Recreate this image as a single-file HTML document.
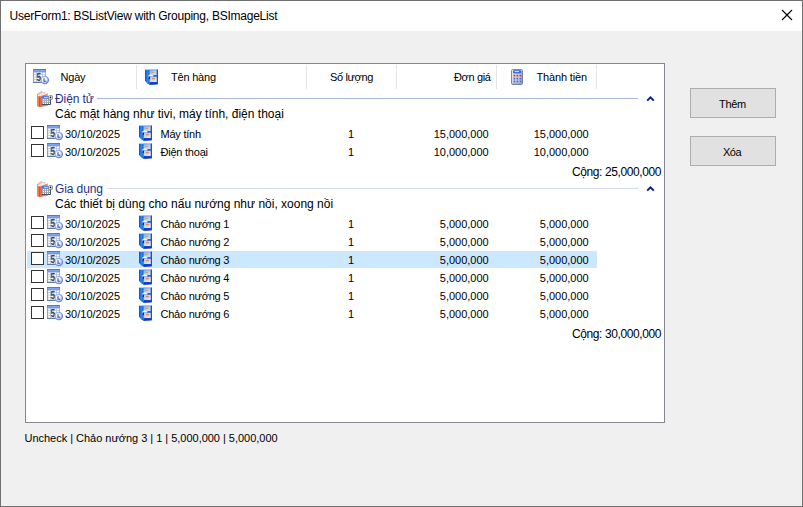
<!DOCTYPE html>
<html lang="vi"><head><meta charset="utf-8"><title>UserForm1</title><style>
html,body{margin:0;padding:0}
body{width:803px;height:507px;overflow:hidden;background:#f0f0f0;font-family:"Liberation Sans",sans-serif;position:relative;color:#000}
.abs,.t,.ic{position:absolute}
.ic{overflow:visible}
.t{white-space:nowrap;line-height:1}
#win{position:absolute;left:0;top:0;width:801px;height:505px;border:1px solid #707070}
#title{position:absolute;left:1px;top:1px;width:801px;height:30px;background:#fff}
#lv{position:absolute;left:25px;top:63px;width:638px;height:358px;border:1px solid #828790;background:#fff}
.sep{position:absolute;top:65px;width:1px;height:24px;background:#e5e5e5}
.s{font-size:11px}
.g{font-size:12px}
.gt{font-size:12px;color:#1e3287}
.cb{position:absolute;width:11px;height:11px;border:1px solid #333;background:#fff}
.gl{position:absolute;height:1px;background:#a9b7df}
.btn{position:absolute;width:84px;height:28px;border:1px solid #adadad;background:#e1e1e1}
.sel{position:absolute;left:27px;width:570px;height:17px;background:#cce8ff}
</style></head><body>
<svg width="0" height="0" style="position:absolute"><defs><linearGradient id="gh" x1="0" y1="0" x2="0" y2="1"><stop offset="0" stop-color="#3f6fe6"/><stop offset="1" stop-color="#7fa2f4"/></linearGradient><radialGradient id="gc" cx="0.4" cy="0.35" r="0.7"><stop offset="0" stop-color="#ffffff"/><stop offset="0.45" stop-color="#e9f0ff"/><stop offset="1" stop-color="#86a6ee"/></radialGradient><linearGradient id="gs" x1="0" y1="0" x2="1" y2="0"><stop offset="0" stop-color="#0e4cbc"/><stop offset="0.5" stop-color="#2c8cf2"/><stop offset="1" stop-color="#1a5cd2"/></linearGradient><linearGradient id="gd" x1="0" y1="0" x2="1" y2="1"><stop offset="0" stop-color="#86aeef"/><stop offset="1" stop-color="#dbe5f8"/></linearGradient><linearGradient id="gb" x1="0" y1="0" x2="1" y2="0"><stop offset="0" stop-color="#e2551f"/><stop offset="0.35" stop-color="#f9a888"/><stop offset="0.7" stop-color="#d8481a"/><stop offset="1" stop-color="#c83c10"/></linearGradient><linearGradient id="gk" x1="0" y1="0" x2="1" y2="1"><stop offset="0" stop-color="#eef1f8"/><stop offset="1" stop-color="#b4bed6"/></linearGradient><linearGradient id="gcs" x1="0" y1="0" x2="1" y2="1"><stop offset="0" stop-color="#b4c8f4"/><stop offset="1" stop-color="#4a6acb"/></linearGradient><linearGradient id="gd2" x1="0" y1="0" x2="1" y2="1"><stop offset="0" stop-color="#aec3f0"/><stop offset="1" stop-color="#e6edfb"/></linearGradient><linearGradient id="gbc" x1="0" y1="0" x2="1" y2="0"><stop offset="0" stop-color="#e9602c"/><stop offset="1" stop-color="#f6936c"/></linearGradient></defs></svg>
<div id="win"></div><div id="title"></div>
<div class="t" id="ttl" style="left:9.5px;top:10px;font-size:12px;letter-spacing:-0.238px">UserForm1: BSListView with Grouping, BSImageList</div>
<svg class="abs" style="left:781px;top:9px" width="12" height="12" viewBox="0 0 12 12"><path d="M1 1L11 11M11 1L1 11" stroke="#000" stroke-width="1.1" fill="none"/></svg>
<div id="lv"></div>
<div class="sep" style="left:136px"></div>
<div class="sep" style="left:306px"></div>
<div class="sep" style="left:396px"></div>
<div class="sep" style="left:496px"></div>
<div class="sep" style="left:596px"></div>
<svg class="ic" style="left:33px;top:69px" width="16" height="16" viewBox="0 0 16 16"><rect x="0" y="0" width="13" height="14" fill="#b7c4e0"/><g fill="#fff"><rect x="1.2" y="3.7" width="2" height="1.5"/><rect x="4.1" y="3.7" width="2" height="1.5"/><rect x="7" y="3.7" width="2" height="1.5"/><rect x="9.9" y="3.7" width="2" height="1.5"/><rect x="1.2" y="6.1" width="2" height="1.5"/><rect x="4.1" y="6.1" width="2" height="1.5"/><rect x="7" y="6.1" width="2" height="1.5"/><rect x="9.9" y="6.1" width="2" height="1.5"/><rect x="1.2" y="8.5" width="2" height="1.5"/><rect x="4.1" y="8.5" width="2" height="1.5"/><rect x="7" y="8.5" width="2" height="1.5"/><rect x="9.9" y="8.5" width="2" height="1.5"/><rect x="1.2" y="10.9" width="2" height="1.5"/><rect x="4.1" y="10.9" width="2" height="1.5"/><rect x="7" y="10.9" width="2" height="1.5"/><rect x="9.9" y="10.9" width="2" height="1.5"/></g><rect x="0" y="0" width="13" height="3.1" fill="url(#gh)"/><rect x="1" y="1.2" width="11" height="0.7" fill="#9dbbff" opacity="0.8"/><rect x="0" y="3" width="0.8" height="11" fill="#8297c6"/><rect x="0" y="13.1" width="13" height="0.9" fill="#5b70a2"/><rect x="12.2" y="3" width="0.8" height="5" fill="#9fb0d8"/><text transform="translate(3.5,11.6) scale(0.78,1)" font-family="Liberation Sans,sans-serif" font-weight="bold" font-size="11" fill="#222" opacity="0.82">5</text><circle cx="11.75" cy="11.1" r="3.7" fill="url(#gc)" stroke="url(#gcs)" stroke-width="1.1"/><path d="M11 9.3V12.2H13.1" stroke="#454e6c" stroke-width="1.1" fill="none"/></svg>
<div class="t s" id="h1" style="left:60.5px;top:72px;letter-spacing:-0.2px">Ngày</div>
<svg class="ic" style="left:143px;top:69px" width="16" height="16" viewBox="0 0 16 16"><path d="M2 0.7L6.5 0.1V15.8L4.4 14.4L2 11.8Z" fill="url(#gs)"/><path d="M6.5 0.1H14.8V15.2L6.5 15.8Z" fill="#2457cf"/><path d="M3 0.5H14.4" stroke="#c3cbf2" stroke-width="0.9" fill="none"/><rect x="6.9" y="1.1" width="6.9" height="5" fill="url(#gd)"/><rect x="6.9" y="7.7" width="7.1" height="5.3" fill="url(#gd2)"/><rect x="8" y="3" width="3" height="1" fill="#dca845"/><rect x="9" y="8.9" width="3" height="1.4" fill="#e28d5a"/><path d="M4.9 7.3C6.2 5.2 8.6 5.1 10.6 6.6L10 7.5H5.4Z" fill="#f4f8ff"/><rect x="5.9" y="7.5" width="1" height="2.6" fill="#0a1f66"/><path d="M6.5 13.4H14.8V15.2L6.5 15.8Z" fill="#1038c2"/><rect x="13.8" y="1" width="1" height="13" fill="#2444aa"/></svg>
<div class="t s" id="h2" style="left:171px;top:72px;letter-spacing:-0.21px">Tên hàng</div>
<div class="t s" id="h3" style="left:330px;top:72px;letter-spacing:-0.35px">Số lượng</div>
<div class="t s" id="h4" style="left:454px;top:72px;letter-spacing:-0.35px">Đơn giá</div>
<svg class="ic" style="left:509px;top:69px" width="16" height="16" viewBox="0 0 16 16"><rect x="2.5" y="0.5" width="11" height="15" rx="1.2" fill="url(#gk)" stroke="#7f89a6"/><path d="M3.4 15H12.6Q13 15 13 14.4V2" stroke="#5f6a8c" stroke-width="0.9" fill="none" opacity="0.7"/><rect x="4" y="1.3" width="8.2" height="3.2" rx="1.1" fill="#3466de"/><rect x="5.6" y="2.1" width="4.4" height="1" fill="#e3ecff"/><g fill="#cf3434"><rect x="4.5" y="5.7" width="1.8" height="1.8"/><rect x="7.5" y="5.7" width="1.8" height="1.8"/><rect x="10.5" y="5.7" width="1.8" height="1.8"/></g><g fill="#3f68cf"><rect x="4.5" y="8.7" width="1.8" height="1.8"/><rect x="7.5" y="8.7" width="1.8" height="1.8"/><rect x="10.5" y="8.7" width="1.8" height="1.8"/></g><g fill="#3f68cf"><rect x="4.5" y="11.6" width="1.8" height="1.8"/><rect x="7.5" y="11.6" width="1.8" height="1.8"/><rect x="10.5" y="11.6" width="1.8" height="1.8"/></g></svg>
<div class="t s" id="h5" style="left:536.5px;top:72px;letter-spacing:-0.15px">Thành tiền</div>
<svg class="ic" style="left:37px;top:91px" width="16" height="16" viewBox="0 0 16 16"><path d="M1.2 4.9L5.2 0.8L9 1.5L4.4 5.4Z" fill="#e6e8ec"/><path d="M5.2 0.8L9 1.5L7.4 2.8Z" fill="#c9ccd2"/><path d="M0.3 4.3L4.9 0.3" stroke="#df5018" stroke-width="1.2" stroke-dasharray="1 0.55" fill="none"/><path d="M2.8 5.6L10.9 2.2V14.8L2.8 15.9Z" fill="url(#gbc)"/><path d="M0.1 4.4L2.9 5.6V15.9L1 15.7L0.1 15Z" fill="url(#gb)"/><rect x="5" y="5" width="8.8" height="8.8" fill="#a6a6a8"/><rect x="5" y="5" width="8.8" height="2.6" fill="#4c7be8"/><rect x="7" y="5.9" width="4" height="0.8" fill="#dfe8ff"/><path d="M5 13.4H13.4V7.6" stroke="#23395f" stroke-width="0.9" fill="none"/><g fill="#fff"><rect x="6" y="8.2" width="1" height="1"/><rect x="8" y="8.2" width="1" height="1"/><rect x="10" y="8.2" width="1" height="1"/><rect x="12" y="8.2" width="1" height="1"/><rect x="6" y="10.1" width="1" height="1"/><rect x="8" y="10.1" width="1" height="1"/><rect x="10" y="10.1" width="1" height="1"/><rect x="12" y="10.1" width="1" height="1"/><rect x="6" y="12" width="1" height="1"/><rect x="8" y="12" width="1" height="1"/><rect x="10" y="12" width="1" height="1"/><rect x="12" y="12" width="1" height="1"/></g><circle cx="13.5" cy="6.4" r="2.5" fill="#858585"/><circle cx="13.5" cy="6.4" r="1.7" fill="#fff"/><circle cx="13.5" cy="6.4" r="0.85" fill="#000"/></svg>
<div class="t gt" style="left:55px;top:93px;letter-spacing:-0.1px">Điện tử</div>
<div class="gl" style="left:97px;top:98px;width:541px;background:#a9b9e0"></div>
<svg class="abs" style="left:646px;top:95px" width="9" height="7" viewBox="0 0 9 7"><path d="M1.2 5.6L4.5 2.3L7.8 5.6" stroke="#0c1f8c" stroke-width="2" fill="none"/></svg>
<div class="t g" style="left:55px;top:108px">Các mặt hàng như tivi, máy tính, điện thoại</div>
<div class="cb" style="left:31px;top:126px"></div>
<svg class="ic" style="left:47px;top:125px" width="16" height="16" viewBox="0 0 16 16"><rect x="0" y="0" width="13" height="14" fill="#b7c4e0"/><g fill="#fff"><rect x="1.2" y="3.7" width="2" height="1.5"/><rect x="4.1" y="3.7" width="2" height="1.5"/><rect x="7" y="3.7" width="2" height="1.5"/><rect x="9.9" y="3.7" width="2" height="1.5"/><rect x="1.2" y="6.1" width="2" height="1.5"/><rect x="4.1" y="6.1" width="2" height="1.5"/><rect x="7" y="6.1" width="2" height="1.5"/><rect x="9.9" y="6.1" width="2" height="1.5"/><rect x="1.2" y="8.5" width="2" height="1.5"/><rect x="4.1" y="8.5" width="2" height="1.5"/><rect x="7" y="8.5" width="2" height="1.5"/><rect x="9.9" y="8.5" width="2" height="1.5"/><rect x="1.2" y="10.9" width="2" height="1.5"/><rect x="4.1" y="10.9" width="2" height="1.5"/><rect x="7" y="10.9" width="2" height="1.5"/><rect x="9.9" y="10.9" width="2" height="1.5"/></g><rect x="0" y="0" width="13" height="3.1" fill="url(#gh)"/><rect x="1" y="1.2" width="11" height="0.7" fill="#9dbbff" opacity="0.8"/><rect x="0" y="3" width="0.8" height="11" fill="#8297c6"/><rect x="0" y="13.1" width="13" height="0.9" fill="#5b70a2"/><rect x="12.2" y="3" width="0.8" height="5" fill="#9fb0d8"/><text transform="translate(3.5,11.6) scale(0.78,1)" font-family="Liberation Sans,sans-serif" font-weight="bold" font-size="11" fill="#222" opacity="0.82">5</text><circle cx="11.75" cy="11.1" r="3.7" fill="url(#gc)" stroke="url(#gcs)" stroke-width="1.1"/><path d="M11 9.3V12.2H13.1" stroke="#454e6c" stroke-width="1.1" fill="none"/></svg>
<div class="t s" style="left:65px;top:129px">30/10/2025</div>
<svg class="ic" style="left:137px;top:125px" width="16" height="16" viewBox="0 0 16 16"><path d="M2 0.7L6.5 0.1V15.8L4.4 14.4L2 11.8Z" fill="url(#gs)"/><path d="M6.5 0.1H14.8V15.2L6.5 15.8Z" fill="#2457cf"/><path d="M3 0.5H14.4" stroke="#c3cbf2" stroke-width="0.9" fill="none"/><rect x="6.9" y="1.1" width="6.9" height="5" fill="url(#gd)"/><rect x="6.9" y="7.7" width="7.1" height="5.3" fill="url(#gd2)"/><rect x="8" y="3" width="3" height="1" fill="#dca845"/><rect x="9" y="8.9" width="3" height="1.4" fill="#e28d5a"/><path d="M4.9 7.3C6.2 5.2 8.6 5.1 10.6 6.6L10 7.5H5.4Z" fill="#f4f8ff"/><rect x="5.9" y="7.5" width="1" height="2.6" fill="#0a1f66"/><path d="M6.5 13.4H14.8V15.2L6.5 15.8Z" fill="#1038c2"/><rect x="13.8" y="1" width="1" height="13" fill="#2444aa"/></svg>
<div class="t s" style="left:160.5px;top:129px;letter-spacing:-0.23px">Máy tính</div>
<div class="t s" style="left:348px;top:129px">1</div>
<div class="t s" style="right:314.3px;top:129px">15,000,000</div>
<div class="t s" style="right:214.29999999999995px;top:129px">15,000,000</div>
<div class="cb" style="left:31px;top:144px"></div>
<svg class="ic" style="left:47px;top:143px" width="16" height="16" viewBox="0 0 16 16"><rect x="0" y="0" width="13" height="14" fill="#b7c4e0"/><g fill="#fff"><rect x="1.2" y="3.7" width="2" height="1.5"/><rect x="4.1" y="3.7" width="2" height="1.5"/><rect x="7" y="3.7" width="2" height="1.5"/><rect x="9.9" y="3.7" width="2" height="1.5"/><rect x="1.2" y="6.1" width="2" height="1.5"/><rect x="4.1" y="6.1" width="2" height="1.5"/><rect x="7" y="6.1" width="2" height="1.5"/><rect x="9.9" y="6.1" width="2" height="1.5"/><rect x="1.2" y="8.5" width="2" height="1.5"/><rect x="4.1" y="8.5" width="2" height="1.5"/><rect x="7" y="8.5" width="2" height="1.5"/><rect x="9.9" y="8.5" width="2" height="1.5"/><rect x="1.2" y="10.9" width="2" height="1.5"/><rect x="4.1" y="10.9" width="2" height="1.5"/><rect x="7" y="10.9" width="2" height="1.5"/><rect x="9.9" y="10.9" width="2" height="1.5"/></g><rect x="0" y="0" width="13" height="3.1" fill="url(#gh)"/><rect x="1" y="1.2" width="11" height="0.7" fill="#9dbbff" opacity="0.8"/><rect x="0" y="3" width="0.8" height="11" fill="#8297c6"/><rect x="0" y="13.1" width="13" height="0.9" fill="#5b70a2"/><rect x="12.2" y="3" width="0.8" height="5" fill="#9fb0d8"/><text transform="translate(3.5,11.6) scale(0.78,1)" font-family="Liberation Sans,sans-serif" font-weight="bold" font-size="11" fill="#222" opacity="0.82">5</text><circle cx="11.75" cy="11.1" r="3.7" fill="url(#gc)" stroke="url(#gcs)" stroke-width="1.1"/><path d="M11 9.3V12.2H13.1" stroke="#454e6c" stroke-width="1.1" fill="none"/></svg>
<div class="t s" style="left:65px;top:147px">30/10/2025</div>
<svg class="ic" style="left:137px;top:143px" width="16" height="16" viewBox="0 0 16 16"><path d="M2 0.7L6.5 0.1V15.8L4.4 14.4L2 11.8Z" fill="url(#gs)"/><path d="M6.5 0.1H14.8V15.2L6.5 15.8Z" fill="#2457cf"/><path d="M3 0.5H14.4" stroke="#c3cbf2" stroke-width="0.9" fill="none"/><rect x="6.9" y="1.1" width="6.9" height="5" fill="url(#gd)"/><rect x="6.9" y="7.7" width="7.1" height="5.3" fill="url(#gd2)"/><rect x="8" y="3" width="3" height="1" fill="#dca845"/><rect x="9" y="8.9" width="3" height="1.4" fill="#e28d5a"/><path d="M4.9 7.3C6.2 5.2 8.6 5.1 10.6 6.6L10 7.5H5.4Z" fill="#f4f8ff"/><rect x="5.9" y="7.5" width="1" height="2.6" fill="#0a1f66"/><path d="M6.5 13.4H14.8V15.2L6.5 15.8Z" fill="#1038c2"/><rect x="13.8" y="1" width="1" height="13" fill="#2444aa"/></svg>
<div class="t s" style="left:160.5px;top:147px;letter-spacing:-0.23px">Điện thoại</div>
<div class="t s" style="left:348px;top:147px">1</div>
<div class="t s" style="right:314.3px;top:147px">10,000,000</div>
<div class="t s" style="right:214.29999999999995px;top:147px">10,000,000</div>
<div class="t g" style="right:142px;top:166px;letter-spacing:-0.4px">Cộng: 25,000,000</div>
<svg class="ic" style="left:37px;top:181px" width="16" height="16" viewBox="0 0 16 16"><path d="M1.2 4.9L5.2 0.8L9 1.5L4.4 5.4Z" fill="#e6e8ec"/><path d="M5.2 0.8L9 1.5L7.4 2.8Z" fill="#c9ccd2"/><path d="M0.3 4.3L4.9 0.3" stroke="#df5018" stroke-width="1.2" stroke-dasharray="1 0.55" fill="none"/><path d="M2.8 5.6L10.9 2.2V14.8L2.8 15.9Z" fill="url(#gbc)"/><path d="M0.1 4.4L2.9 5.6V15.9L1 15.7L0.1 15Z" fill="url(#gb)"/><rect x="5" y="5" width="8.8" height="8.8" fill="#a6a6a8"/><rect x="5" y="5" width="8.8" height="2.6" fill="#4c7be8"/><rect x="7" y="5.9" width="4" height="0.8" fill="#dfe8ff"/><path d="M5 13.4H13.4V7.6" stroke="#23395f" stroke-width="0.9" fill="none"/><g fill="#fff"><rect x="6" y="8.2" width="1" height="1"/><rect x="8" y="8.2" width="1" height="1"/><rect x="10" y="8.2" width="1" height="1"/><rect x="12" y="8.2" width="1" height="1"/><rect x="6" y="10.1" width="1" height="1"/><rect x="8" y="10.1" width="1" height="1"/><rect x="10" y="10.1" width="1" height="1"/><rect x="12" y="10.1" width="1" height="1"/><rect x="6" y="12" width="1" height="1"/><rect x="8" y="12" width="1" height="1"/><rect x="10" y="12" width="1" height="1"/><rect x="12" y="12" width="1" height="1"/></g><circle cx="13.5" cy="6.4" r="2.5" fill="#858585"/><circle cx="13.5" cy="6.4" r="1.7" fill="#fff"/><circle cx="13.5" cy="6.4" r="0.85" fill="#000"/></svg>
<div class="t gt" style="left:55px;top:183px;letter-spacing:-0.1px">Gia dụng</div>
<div class="gl" style="left:107px;top:188px;width:531px;background:#d2d9ef"></div>
<svg class="abs" style="left:646px;top:185px" width="9" height="7" viewBox="0 0 9 7"><path d="M1.2 5.6L4.5 2.3L7.8 5.6" stroke="#0c1f8c" stroke-width="2" fill="none"/></svg>
<div class="t g" style="left:55px;top:198px">Các thiết bị dùng cho nấu nướng như nồi, xoong nồi</div>
<div class="cb" style="left:31px;top:216px"></div>
<svg class="ic" style="left:47px;top:215px" width="16" height="16" viewBox="0 0 16 16"><rect x="0" y="0" width="13" height="14" fill="#b7c4e0"/><g fill="#fff"><rect x="1.2" y="3.7" width="2" height="1.5"/><rect x="4.1" y="3.7" width="2" height="1.5"/><rect x="7" y="3.7" width="2" height="1.5"/><rect x="9.9" y="3.7" width="2" height="1.5"/><rect x="1.2" y="6.1" width="2" height="1.5"/><rect x="4.1" y="6.1" width="2" height="1.5"/><rect x="7" y="6.1" width="2" height="1.5"/><rect x="9.9" y="6.1" width="2" height="1.5"/><rect x="1.2" y="8.5" width="2" height="1.5"/><rect x="4.1" y="8.5" width="2" height="1.5"/><rect x="7" y="8.5" width="2" height="1.5"/><rect x="9.9" y="8.5" width="2" height="1.5"/><rect x="1.2" y="10.9" width="2" height="1.5"/><rect x="4.1" y="10.9" width="2" height="1.5"/><rect x="7" y="10.9" width="2" height="1.5"/><rect x="9.9" y="10.9" width="2" height="1.5"/></g><rect x="0" y="0" width="13" height="3.1" fill="url(#gh)"/><rect x="1" y="1.2" width="11" height="0.7" fill="#9dbbff" opacity="0.8"/><rect x="0" y="3" width="0.8" height="11" fill="#8297c6"/><rect x="0" y="13.1" width="13" height="0.9" fill="#5b70a2"/><rect x="12.2" y="3" width="0.8" height="5" fill="#9fb0d8"/><text transform="translate(3.5,11.6) scale(0.78,1)" font-family="Liberation Sans,sans-serif" font-weight="bold" font-size="11" fill="#222" opacity="0.82">5</text><circle cx="11.75" cy="11.1" r="3.7" fill="url(#gc)" stroke="url(#gcs)" stroke-width="1.1"/><path d="M11 9.3V12.2H13.1" stroke="#454e6c" stroke-width="1.1" fill="none"/></svg>
<div class="t s" style="left:65px;top:219px">30/10/2025</div>
<svg class="ic" style="left:137px;top:215px" width="16" height="16" viewBox="0 0 16 16"><path d="M2 0.7L6.5 0.1V15.8L4.4 14.4L2 11.8Z" fill="url(#gs)"/><path d="M6.5 0.1H14.8V15.2L6.5 15.8Z" fill="#2457cf"/><path d="M3 0.5H14.4" stroke="#c3cbf2" stroke-width="0.9" fill="none"/><rect x="6.9" y="1.1" width="6.9" height="5" fill="url(#gd)"/><rect x="6.9" y="7.7" width="7.1" height="5.3" fill="url(#gd2)"/><rect x="8" y="3" width="3" height="1" fill="#dca845"/><rect x="9" y="8.9" width="3" height="1.4" fill="#e28d5a"/><path d="M4.9 7.3C6.2 5.2 8.6 5.1 10.6 6.6L10 7.5H5.4Z" fill="#f4f8ff"/><rect x="5.9" y="7.5" width="1" height="2.6" fill="#0a1f66"/><path d="M6.5 13.4H14.8V15.2L6.5 15.8Z" fill="#1038c2"/><rect x="13.8" y="1" width="1" height="13" fill="#2444aa"/></svg>
<div class="t s" style="left:160.5px;top:219px;letter-spacing:-0.23px">Chảo nướng 1</div>
<div class="t s" style="left:348px;top:219px">1</div>
<div class="t s" style="right:314.3px;top:219px">5,000,000</div>
<div class="t s" style="right:214.29999999999995px;top:219px">5,000,000</div>
<div class="cb" style="left:31px;top:234px"></div>
<svg class="ic" style="left:47px;top:233px" width="16" height="16" viewBox="0 0 16 16"><rect x="0" y="0" width="13" height="14" fill="#b7c4e0"/><g fill="#fff"><rect x="1.2" y="3.7" width="2" height="1.5"/><rect x="4.1" y="3.7" width="2" height="1.5"/><rect x="7" y="3.7" width="2" height="1.5"/><rect x="9.9" y="3.7" width="2" height="1.5"/><rect x="1.2" y="6.1" width="2" height="1.5"/><rect x="4.1" y="6.1" width="2" height="1.5"/><rect x="7" y="6.1" width="2" height="1.5"/><rect x="9.9" y="6.1" width="2" height="1.5"/><rect x="1.2" y="8.5" width="2" height="1.5"/><rect x="4.1" y="8.5" width="2" height="1.5"/><rect x="7" y="8.5" width="2" height="1.5"/><rect x="9.9" y="8.5" width="2" height="1.5"/><rect x="1.2" y="10.9" width="2" height="1.5"/><rect x="4.1" y="10.9" width="2" height="1.5"/><rect x="7" y="10.9" width="2" height="1.5"/><rect x="9.9" y="10.9" width="2" height="1.5"/></g><rect x="0" y="0" width="13" height="3.1" fill="url(#gh)"/><rect x="1" y="1.2" width="11" height="0.7" fill="#9dbbff" opacity="0.8"/><rect x="0" y="3" width="0.8" height="11" fill="#8297c6"/><rect x="0" y="13.1" width="13" height="0.9" fill="#5b70a2"/><rect x="12.2" y="3" width="0.8" height="5" fill="#9fb0d8"/><text transform="translate(3.5,11.6) scale(0.78,1)" font-family="Liberation Sans,sans-serif" font-weight="bold" font-size="11" fill="#222" opacity="0.82">5</text><circle cx="11.75" cy="11.1" r="3.7" fill="url(#gc)" stroke="url(#gcs)" stroke-width="1.1"/><path d="M11 9.3V12.2H13.1" stroke="#454e6c" stroke-width="1.1" fill="none"/></svg>
<div class="t s" style="left:65px;top:237px">30/10/2025</div>
<svg class="ic" style="left:137px;top:233px" width="16" height="16" viewBox="0 0 16 16"><path d="M2 0.7L6.5 0.1V15.8L4.4 14.4L2 11.8Z" fill="url(#gs)"/><path d="M6.5 0.1H14.8V15.2L6.5 15.8Z" fill="#2457cf"/><path d="M3 0.5H14.4" stroke="#c3cbf2" stroke-width="0.9" fill="none"/><rect x="6.9" y="1.1" width="6.9" height="5" fill="url(#gd)"/><rect x="6.9" y="7.7" width="7.1" height="5.3" fill="url(#gd2)"/><rect x="8" y="3" width="3" height="1" fill="#dca845"/><rect x="9" y="8.9" width="3" height="1.4" fill="#e28d5a"/><path d="M4.9 7.3C6.2 5.2 8.6 5.1 10.6 6.6L10 7.5H5.4Z" fill="#f4f8ff"/><rect x="5.9" y="7.5" width="1" height="2.6" fill="#0a1f66"/><path d="M6.5 13.4H14.8V15.2L6.5 15.8Z" fill="#1038c2"/><rect x="13.8" y="1" width="1" height="13" fill="#2444aa"/></svg>
<div class="t s" style="left:160.5px;top:237px;letter-spacing:-0.23px">Chảo nướng 2</div>
<div class="t s" style="left:348px;top:237px">1</div>
<div class="t s" style="right:314.3px;top:237px">5,000,000</div>
<div class="t s" style="right:214.29999999999995px;top:237px">5,000,000</div>
<div class="sel" style="top:251px"></div>
<div class="cb" style="left:31px;top:252px"></div>
<svg class="ic" style="left:47px;top:251px" width="16" height="16" viewBox="0 0 16 16"><rect x="0" y="0" width="13" height="14" fill="#b7c4e0"/><g fill="#fff"><rect x="1.2" y="3.7" width="2" height="1.5"/><rect x="4.1" y="3.7" width="2" height="1.5"/><rect x="7" y="3.7" width="2" height="1.5"/><rect x="9.9" y="3.7" width="2" height="1.5"/><rect x="1.2" y="6.1" width="2" height="1.5"/><rect x="4.1" y="6.1" width="2" height="1.5"/><rect x="7" y="6.1" width="2" height="1.5"/><rect x="9.9" y="6.1" width="2" height="1.5"/><rect x="1.2" y="8.5" width="2" height="1.5"/><rect x="4.1" y="8.5" width="2" height="1.5"/><rect x="7" y="8.5" width="2" height="1.5"/><rect x="9.9" y="8.5" width="2" height="1.5"/><rect x="1.2" y="10.9" width="2" height="1.5"/><rect x="4.1" y="10.9" width="2" height="1.5"/><rect x="7" y="10.9" width="2" height="1.5"/><rect x="9.9" y="10.9" width="2" height="1.5"/></g><rect x="0" y="0" width="13" height="3.1" fill="url(#gh)"/><rect x="1" y="1.2" width="11" height="0.7" fill="#9dbbff" opacity="0.8"/><rect x="0" y="3" width="0.8" height="11" fill="#8297c6"/><rect x="0" y="13.1" width="13" height="0.9" fill="#5b70a2"/><rect x="12.2" y="3" width="0.8" height="5" fill="#9fb0d8"/><text transform="translate(3.5,11.6) scale(0.78,1)" font-family="Liberation Sans,sans-serif" font-weight="bold" font-size="11" fill="#222" opacity="0.82">5</text><circle cx="11.75" cy="11.1" r="3.7" fill="url(#gc)" stroke="url(#gcs)" stroke-width="1.1"/><path d="M11 9.3V12.2H13.1" stroke="#454e6c" stroke-width="1.1" fill="none"/></svg>
<div class="t s" style="left:65px;top:255px">30/10/2025</div>
<svg class="ic" style="left:137px;top:251px" width="16" height="16" viewBox="0 0 16 16"><path d="M2 0.7L6.5 0.1V15.8L4.4 14.4L2 11.8Z" fill="url(#gs)"/><path d="M6.5 0.1H14.8V15.2L6.5 15.8Z" fill="#2457cf"/><path d="M3 0.5H14.4" stroke="#c3cbf2" stroke-width="0.9" fill="none"/><rect x="6.9" y="1.1" width="6.9" height="5" fill="url(#gd)"/><rect x="6.9" y="7.7" width="7.1" height="5.3" fill="url(#gd2)"/><rect x="8" y="3" width="3" height="1" fill="#dca845"/><rect x="9" y="8.9" width="3" height="1.4" fill="#e28d5a"/><path d="M4.9 7.3C6.2 5.2 8.6 5.1 10.6 6.6L10 7.5H5.4Z" fill="#f4f8ff"/><rect x="5.9" y="7.5" width="1" height="2.6" fill="#0a1f66"/><path d="M6.5 13.4H14.8V15.2L6.5 15.8Z" fill="#1038c2"/><rect x="13.8" y="1" width="1" height="13" fill="#2444aa"/></svg>
<div class="t s" style="left:160.5px;top:255px;letter-spacing:-0.23px">Chảo nướng 3</div>
<div class="t s" style="left:348px;top:255px">1</div>
<div class="t s" style="right:314.3px;top:255px">5,000,000</div>
<div class="t s" style="right:214.29999999999995px;top:255px">5,000,000</div>
<div class="cb" style="left:31px;top:270px"></div>
<svg class="ic" style="left:47px;top:269px" width="16" height="16" viewBox="0 0 16 16"><rect x="0" y="0" width="13" height="14" fill="#b7c4e0"/><g fill="#fff"><rect x="1.2" y="3.7" width="2" height="1.5"/><rect x="4.1" y="3.7" width="2" height="1.5"/><rect x="7" y="3.7" width="2" height="1.5"/><rect x="9.9" y="3.7" width="2" height="1.5"/><rect x="1.2" y="6.1" width="2" height="1.5"/><rect x="4.1" y="6.1" width="2" height="1.5"/><rect x="7" y="6.1" width="2" height="1.5"/><rect x="9.9" y="6.1" width="2" height="1.5"/><rect x="1.2" y="8.5" width="2" height="1.5"/><rect x="4.1" y="8.5" width="2" height="1.5"/><rect x="7" y="8.5" width="2" height="1.5"/><rect x="9.9" y="8.5" width="2" height="1.5"/><rect x="1.2" y="10.9" width="2" height="1.5"/><rect x="4.1" y="10.9" width="2" height="1.5"/><rect x="7" y="10.9" width="2" height="1.5"/><rect x="9.9" y="10.9" width="2" height="1.5"/></g><rect x="0" y="0" width="13" height="3.1" fill="url(#gh)"/><rect x="1" y="1.2" width="11" height="0.7" fill="#9dbbff" opacity="0.8"/><rect x="0" y="3" width="0.8" height="11" fill="#8297c6"/><rect x="0" y="13.1" width="13" height="0.9" fill="#5b70a2"/><rect x="12.2" y="3" width="0.8" height="5" fill="#9fb0d8"/><text transform="translate(3.5,11.6) scale(0.78,1)" font-family="Liberation Sans,sans-serif" font-weight="bold" font-size="11" fill="#222" opacity="0.82">5</text><circle cx="11.75" cy="11.1" r="3.7" fill="url(#gc)" stroke="url(#gcs)" stroke-width="1.1"/><path d="M11 9.3V12.2H13.1" stroke="#454e6c" stroke-width="1.1" fill="none"/></svg>
<div class="t s" style="left:65px;top:273px">30/10/2025</div>
<svg class="ic" style="left:137px;top:269px" width="16" height="16" viewBox="0 0 16 16"><path d="M2 0.7L6.5 0.1V15.8L4.4 14.4L2 11.8Z" fill="url(#gs)"/><path d="M6.5 0.1H14.8V15.2L6.5 15.8Z" fill="#2457cf"/><path d="M3 0.5H14.4" stroke="#c3cbf2" stroke-width="0.9" fill="none"/><rect x="6.9" y="1.1" width="6.9" height="5" fill="url(#gd)"/><rect x="6.9" y="7.7" width="7.1" height="5.3" fill="url(#gd2)"/><rect x="8" y="3" width="3" height="1" fill="#dca845"/><rect x="9" y="8.9" width="3" height="1.4" fill="#e28d5a"/><path d="M4.9 7.3C6.2 5.2 8.6 5.1 10.6 6.6L10 7.5H5.4Z" fill="#f4f8ff"/><rect x="5.9" y="7.5" width="1" height="2.6" fill="#0a1f66"/><path d="M6.5 13.4H14.8V15.2L6.5 15.8Z" fill="#1038c2"/><rect x="13.8" y="1" width="1" height="13" fill="#2444aa"/></svg>
<div class="t s" style="left:160.5px;top:273px;letter-spacing:-0.23px">Chảo nướng 4</div>
<div class="t s" style="left:348px;top:273px">1</div>
<div class="t s" style="right:314.3px;top:273px">5,000,000</div>
<div class="t s" style="right:214.29999999999995px;top:273px">5,000,000</div>
<div class="cb" style="left:31px;top:288px"></div>
<svg class="ic" style="left:47px;top:287px" width="16" height="16" viewBox="0 0 16 16"><rect x="0" y="0" width="13" height="14" fill="#b7c4e0"/><g fill="#fff"><rect x="1.2" y="3.7" width="2" height="1.5"/><rect x="4.1" y="3.7" width="2" height="1.5"/><rect x="7" y="3.7" width="2" height="1.5"/><rect x="9.9" y="3.7" width="2" height="1.5"/><rect x="1.2" y="6.1" width="2" height="1.5"/><rect x="4.1" y="6.1" width="2" height="1.5"/><rect x="7" y="6.1" width="2" height="1.5"/><rect x="9.9" y="6.1" width="2" height="1.5"/><rect x="1.2" y="8.5" width="2" height="1.5"/><rect x="4.1" y="8.5" width="2" height="1.5"/><rect x="7" y="8.5" width="2" height="1.5"/><rect x="9.9" y="8.5" width="2" height="1.5"/><rect x="1.2" y="10.9" width="2" height="1.5"/><rect x="4.1" y="10.9" width="2" height="1.5"/><rect x="7" y="10.9" width="2" height="1.5"/><rect x="9.9" y="10.9" width="2" height="1.5"/></g><rect x="0" y="0" width="13" height="3.1" fill="url(#gh)"/><rect x="1" y="1.2" width="11" height="0.7" fill="#9dbbff" opacity="0.8"/><rect x="0" y="3" width="0.8" height="11" fill="#8297c6"/><rect x="0" y="13.1" width="13" height="0.9" fill="#5b70a2"/><rect x="12.2" y="3" width="0.8" height="5" fill="#9fb0d8"/><text transform="translate(3.5,11.6) scale(0.78,1)" font-family="Liberation Sans,sans-serif" font-weight="bold" font-size="11" fill="#222" opacity="0.82">5</text><circle cx="11.75" cy="11.1" r="3.7" fill="url(#gc)" stroke="url(#gcs)" stroke-width="1.1"/><path d="M11 9.3V12.2H13.1" stroke="#454e6c" stroke-width="1.1" fill="none"/></svg>
<div class="t s" style="left:65px;top:291px">30/10/2025</div>
<svg class="ic" style="left:137px;top:287px" width="16" height="16" viewBox="0 0 16 16"><path d="M2 0.7L6.5 0.1V15.8L4.4 14.4L2 11.8Z" fill="url(#gs)"/><path d="M6.5 0.1H14.8V15.2L6.5 15.8Z" fill="#2457cf"/><path d="M3 0.5H14.4" stroke="#c3cbf2" stroke-width="0.9" fill="none"/><rect x="6.9" y="1.1" width="6.9" height="5" fill="url(#gd)"/><rect x="6.9" y="7.7" width="7.1" height="5.3" fill="url(#gd2)"/><rect x="8" y="3" width="3" height="1" fill="#dca845"/><rect x="9" y="8.9" width="3" height="1.4" fill="#e28d5a"/><path d="M4.9 7.3C6.2 5.2 8.6 5.1 10.6 6.6L10 7.5H5.4Z" fill="#f4f8ff"/><rect x="5.9" y="7.5" width="1" height="2.6" fill="#0a1f66"/><path d="M6.5 13.4H14.8V15.2L6.5 15.8Z" fill="#1038c2"/><rect x="13.8" y="1" width="1" height="13" fill="#2444aa"/></svg>
<div class="t s" style="left:160.5px;top:291px;letter-spacing:-0.23px">Chảo nướng 5</div>
<div class="t s" style="left:348px;top:291px">1</div>
<div class="t s" style="right:314.3px;top:291px">5,000,000</div>
<div class="t s" style="right:214.29999999999995px;top:291px">5,000,000</div>
<div class="cb" style="left:31px;top:306px"></div>
<svg class="ic" style="left:47px;top:305px" width="16" height="16" viewBox="0 0 16 16"><rect x="0" y="0" width="13" height="14" fill="#b7c4e0"/><g fill="#fff"><rect x="1.2" y="3.7" width="2" height="1.5"/><rect x="4.1" y="3.7" width="2" height="1.5"/><rect x="7" y="3.7" width="2" height="1.5"/><rect x="9.9" y="3.7" width="2" height="1.5"/><rect x="1.2" y="6.1" width="2" height="1.5"/><rect x="4.1" y="6.1" width="2" height="1.5"/><rect x="7" y="6.1" width="2" height="1.5"/><rect x="9.9" y="6.1" width="2" height="1.5"/><rect x="1.2" y="8.5" width="2" height="1.5"/><rect x="4.1" y="8.5" width="2" height="1.5"/><rect x="7" y="8.5" width="2" height="1.5"/><rect x="9.9" y="8.5" width="2" height="1.5"/><rect x="1.2" y="10.9" width="2" height="1.5"/><rect x="4.1" y="10.9" width="2" height="1.5"/><rect x="7" y="10.9" width="2" height="1.5"/><rect x="9.9" y="10.9" width="2" height="1.5"/></g><rect x="0" y="0" width="13" height="3.1" fill="url(#gh)"/><rect x="1" y="1.2" width="11" height="0.7" fill="#9dbbff" opacity="0.8"/><rect x="0" y="3" width="0.8" height="11" fill="#8297c6"/><rect x="0" y="13.1" width="13" height="0.9" fill="#5b70a2"/><rect x="12.2" y="3" width="0.8" height="5" fill="#9fb0d8"/><text transform="translate(3.5,11.6) scale(0.78,1)" font-family="Liberation Sans,sans-serif" font-weight="bold" font-size="11" fill="#222" opacity="0.82">5</text><circle cx="11.75" cy="11.1" r="3.7" fill="url(#gc)" stroke="url(#gcs)" stroke-width="1.1"/><path d="M11 9.3V12.2H13.1" stroke="#454e6c" stroke-width="1.1" fill="none"/></svg>
<div class="t s" style="left:65px;top:309px">30/10/2025</div>
<svg class="ic" style="left:137px;top:305px" width="16" height="16" viewBox="0 0 16 16"><path d="M2 0.7L6.5 0.1V15.8L4.4 14.4L2 11.8Z" fill="url(#gs)"/><path d="M6.5 0.1H14.8V15.2L6.5 15.8Z" fill="#2457cf"/><path d="M3 0.5H14.4" stroke="#c3cbf2" stroke-width="0.9" fill="none"/><rect x="6.9" y="1.1" width="6.9" height="5" fill="url(#gd)"/><rect x="6.9" y="7.7" width="7.1" height="5.3" fill="url(#gd2)"/><rect x="8" y="3" width="3" height="1" fill="#dca845"/><rect x="9" y="8.9" width="3" height="1.4" fill="#e28d5a"/><path d="M4.9 7.3C6.2 5.2 8.6 5.1 10.6 6.6L10 7.5H5.4Z" fill="#f4f8ff"/><rect x="5.9" y="7.5" width="1" height="2.6" fill="#0a1f66"/><path d="M6.5 13.4H14.8V15.2L6.5 15.8Z" fill="#1038c2"/><rect x="13.8" y="1" width="1" height="13" fill="#2444aa"/></svg>
<div class="t s" style="left:160.5px;top:309px;letter-spacing:-0.23px">Chảo nướng 6</div>
<div class="t s" style="left:348px;top:309px">1</div>
<div class="t s" style="right:314.3px;top:309px">5,000,000</div>
<div class="t s" style="right:214.29999999999995px;top:309px">5,000,000</div>
<div class="t g" style="right:142px;top:328px;letter-spacing:-0.4px">Cộng: 30,000,000</div>
<div class="btn" style="left:690px;top:88px"></div><div class="t s" style="left:719px;top:99px;letter-spacing:-0.3px">Thêm</div>
<div class="btn" style="left:690px;top:136px"></div><div class="t s" style="left:723px;top:147px;letter-spacing:-0.5px">Xóa</div>
<div class="t s" style="left:24.5px;top:433px;letter-spacing:-0.02px">Uncheck | Chảo nướng 3 | 1 | 5,000,000 | 5,000,000</div>
</body></html>
